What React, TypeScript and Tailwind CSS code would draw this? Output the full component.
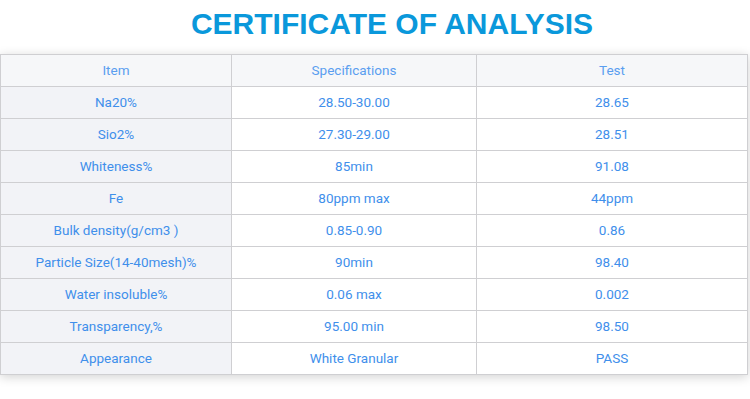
const rows: [string, string, string][] = [
  ['Na20%', '28.50-30.00', '28.65'],
  ['Sio2%', '27.30-29.00', '28.51'],
  ['Whiteness%', '85min', '91.08'],
  ['Fe', '80ppm max', '44ppm'],
  ['Bulk density(g/cm3 )', '0.85-0.90', '0.86'],
  ['Particle Size(14-40mesh)%', '90min', '98.40'],
  ['Water insoluble%', '0.06 max', '0.002'],
  ['Transparency,%', '95.00 min', '98.50'],
  ['Appearance', 'White Granular', 'PASS'],
];

export default function App() {
  return (
    <div className="w-[750px] h-[399px] bg-white font-['Roboto',sans-serif]">
      <h1 className="pl-[34px] pt-[7px] h-[54px] text-center font-['Liberation_Sans',Arial,sans-serif] font-bold text-[30px] leading-[34px] text-[#0a98db]">
        CERTIFICATE OF ANALYSIS
      </h1>
      <table className="w-[748px] border-collapse table-fixed text-[13.5px] text-[#3f8feb] shadow-[0_2px_10px_rgba(0,0,0,0.18)]">
        <colgroup>
          <col className="w-[231px]" />
          <col className="w-[245px]" />
          <col />
        </colgroup>
        <thead>
          <tr className="h-[32px] bg-[#f6f7f9]">
            <th className="border border-[#cfcfd2] font-normal text-[#5a9ef0]">Item</th>
            <th className="border border-[#cfcfd2] font-normal text-[#5a9ef0]">Specifications</th>
            <th className="border border-[#cfcfd2] font-normal text-[#5a9ef0]">Test</th>
          </tr>
        </thead>
        <tbody>
          {rows.map(([item, spec, test]) => (
            <tr key={item} className="h-[32px]">
              <td className="border border-[#cfcfd2] bg-[#f2f3f7] text-center">{item}</td>
              <td className="border border-[#cfcfd2] bg-white text-center">{spec}</td>
              <td className="border border-[#cfcfd2] bg-white text-center">{test}</td>
            </tr>
          ))}
        </tbody>
      </table>
    </div>
  );
}
